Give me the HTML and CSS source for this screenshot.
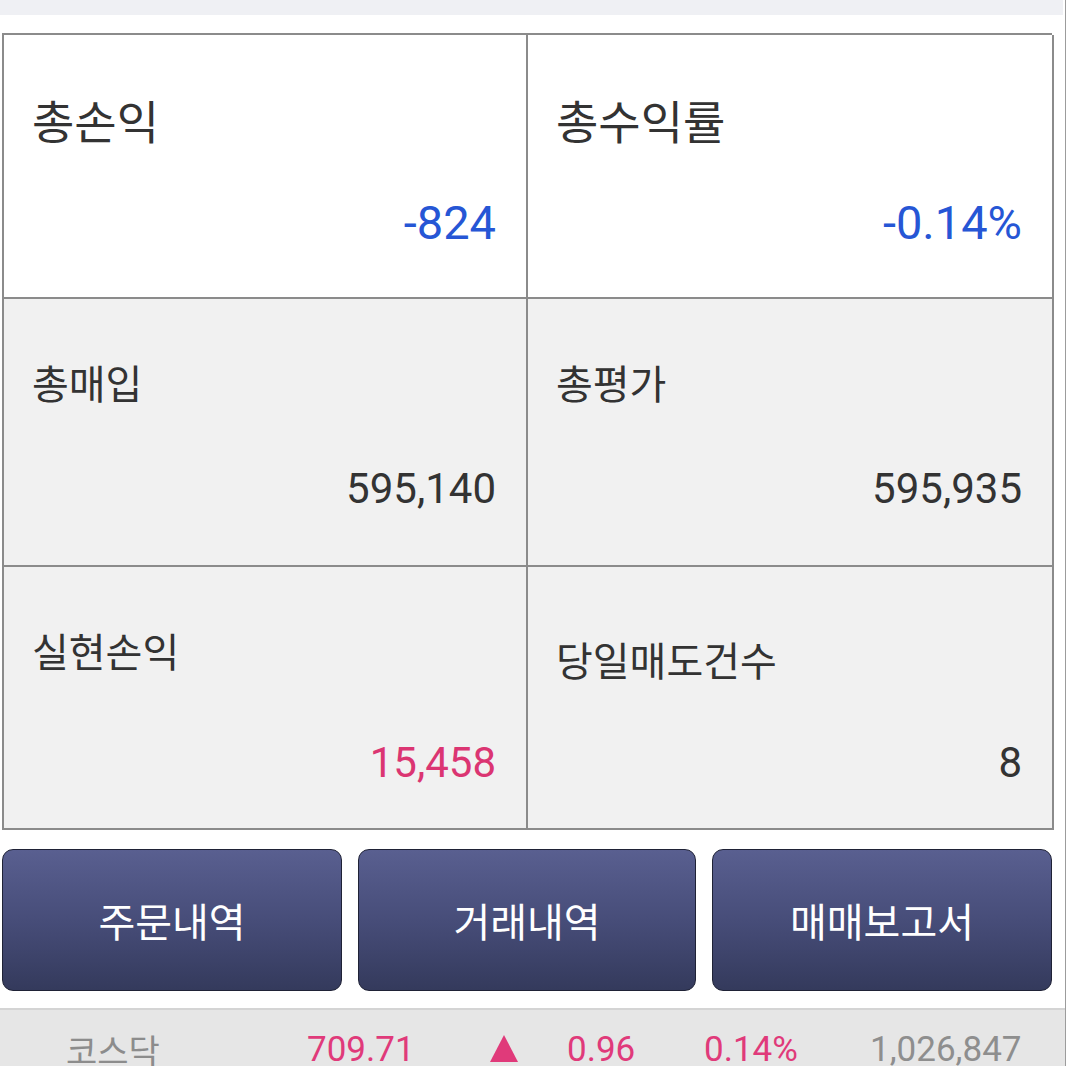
FILE: index.html
```html
<!DOCTYPE html>
<html lang="ko">
<head>
<meta charset="utf-8">
<title>잔고</title>
<link rel="stylesheet" href="styles.css">
</head>
<body>
<div class="page">
  <div class="topstrip"></div>
  <div class="summary">
    <div class="cell row1">
      <div class="label big">총손익</div>
      <div class="value big blue">-824</div>
    </div>
    <div class="cell row1">
      <div class="label big">총수익률</div>
      <div class="value big blue">-0.14%</div>
    </div>
    <div class="cell row2 gray">
      <div class="label">총매입</div>
      <div class="value">595,140</div>
    </div>
    <div class="cell row2 gray">
      <div class="label">총평가</div>
      <div class="value">595,935</div>
    </div>
    <div class="cell row3 gray">
      <div class="label">실현손익</div>
      <div class="value pink">15,458</div>
    </div>
    <div class="cell row3 gray shifted">
      <div class="label">당일매도건수</div>
      <div class="value">8</div>
    </div>
  </div>
  <div class="buttons">
    <button class="btn">주문내역</button>
    <button class="btn">거래내역</button>
    <button class="btn">매매보고서</button>
  </div>
  <div class="ticker">
    <span class="t-name">코스닥</span>
    <span class="t-up">709.71</span>
    <span class="t-up"><span class="tri"></span></span>
    <span class="t-up">0.96</span>
    <span class="t-up">0.14%</span>
    <span class="t-vol">1,026,847</span>
  </div>
</div>
</body>
</html>
```

FILE: styles.css
```css
html, body {
  margin: 0;
  padding: 0;
  background: #ffffff;
}

body {
  font-family: Roboto, "Noto Sans CJK KR", sans-serif;
  color: #333333;
  overflow: hidden;
}

.page {
  width: 1065px;
  height: 1066px;
  border-right: 1px solid #9c9c9c;
  box-sizing: content-box;
  overflow: hidden;
}

.topstrip {
  height: 15px;
  width: 1063px;
  background: #eff0f4;
}

.summary {
  margin: 18px 0 0 2px;
  width: 1050px;
  display: grid;
  grid-template-columns: 524px 526px;
  border-top: 2px solid #8b8b8b;
  border-left: 2px solid #8b8b8b;
  box-sizing: border-box;
}

.cell {
  border-right: 2px solid #8b8b8b;
  border-bottom: 2px solid #8b8b8b;
  display: flex;
  flex-direction: column;
  justify-content: space-between;
  padding: 0 30px 0 28px;
  box-sizing: border-box;
  background: #ffffff;
}

.cell.gray {
  background: #f1f1f1;
}

.row1 {
  height: 264px;
  padding-top: 59px;
  padding-bottom: 46px;
}

.row2 {
  height: 268px;
  padding-top: 61px;
  padding-bottom: 51px;
}

.row3 {
  height: 263px;
  padding-top: 61px;
  padding-bottom: 40px;
}

.row3.shifted {
  padding-top: 70px;
}

.label {
  font-family: "Noto Sans CJK KR", sans-serif;
  font-size: 40px;
  line-height: 44px;
  color: #333333;
}

.label.big {
  font-size: 46px;
  line-height: 50px;
}

.value {
  font-size: 42px;
  line-height: 50px;
  text-align: right;
  color: #333333;
}

.value.big {
  font-size: 47px;
  line-height: 56px;
}

.blue {
  color: #2656d5;
}

.pink {
  color: #db3572;
}

.buttons {
  margin: 19px 0 0 2px;
  width: 1050px;
  display: grid;
  grid-template-columns: 340px 338px 340px;
  column-gap: 16px;
}

.btn {
  height: 142px;
  border: 1.5px solid #1f2236;
  border-radius: 11px;
  background: linear-gradient(to bottom, #595f90 0%, #474d79 50%, #343a5c 100%);
  color: #ffffff;
  font-family: "Noto Sans CJK KR", sans-serif;
  font-size: 40px;
  font-weight: 400;
  padding: 0;
  cursor: pointer;
}

.ticker {
  margin-top: 17px;
  height: 80px;
  border-top: 2px solid #d4d4d4;
  background: #e6e6e6;
  display: grid;
  grid-template-columns: 241px 183px 77px 137px 166px auto;
  padding-left: 66px;
  align-items: start;
  padding-top: 20px;
  box-sizing: border-box;
  font-size: 35px;
  line-height: 40px;
}

.t-name {
  color: #8c8c8c;
  font-family: "Noto Sans CJK KR", sans-serif;
  font-size: 34px;
}

.t-up {
  color: #e03a7a;
}

.t-vol {
  color: #8e8e8e;
}

.tri {
  display: inline-block;
  width: 0;
  height: 0;
  border-left: 14px solid transparent;
  border-right: 14px solid transparent;
  border-bottom: 27px solid #e03a7a;
  vertical-align: -1px;
}
```
